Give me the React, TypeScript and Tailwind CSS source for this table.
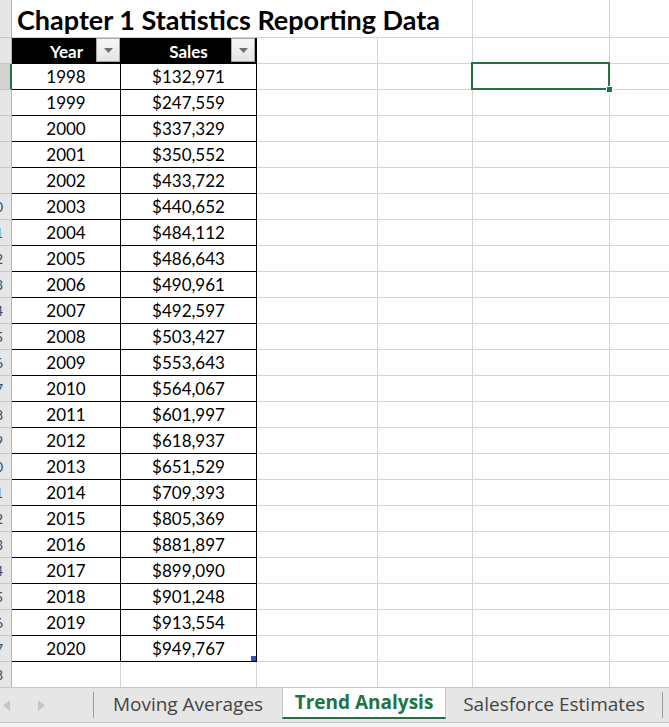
import React from 'react';

const rows: [number, string][] = [
  [1998, '$132,971'],
  [1999, '$247,559'],
  [2000, '$337,329'],
  [2001, '$350,552'],
  [2002, '$433,722'],
  [2003, '$440,652'],
  [2004, '$484,112'],
  [2005, '$486,643'],
  [2006, '$490,961'],
  [2007, '$492,597'],
  [2008, '$503,427'],
  [2009, '$553,643'],
  [2010, '$564,067'],
  [2011, '$601,997'],
  [2012, '$618,937'],
  [2013, '$651,529'],
  [2014, '$709,393'],
  [2015, '$805,369'],
  [2016, '$881,897'],
  [2017, '$899,090'],
  [2018, '$901,248'],
  [2019, '$913,554'],
  [2020, '$949,767'],
];

// row number header, only the right edge shows (sheet is scrolled)
function RowHead({ n, active, h = 'h-[26px]' }: { n: number; active?: boolean; h?: string }) {
  return (
    <div
      className={`${h} w-[12px] shrink-0 overflow-hidden border-b border-[#c8c8c8] ${
        active ? 'bg-[#d2d2d2] border-r-2 border-r-[#217346]' : 'bg-[#e6e6e6] border-r border-r-[#b4b4b4]'
      }`}
    >
      <div className="ml-[-20px] flex h-full w-[30px] items-center justify-center text-[14px] text-[#3c4a66]">
        {n}
      </div>
    </div>
  );
}

function FilterButton() {
  return (
    <div className="absolute right-[1px] top-[0px] flex h-[24px] w-[24px] items-center justify-center border border-[#a6a6a6] bg-gradient-to-b from-[#f7f7f7] to-[#e4e4e4]">
      <svg width="9" height="5" viewBox="0 0 9 5">
        <path d="M0 0h9L4.5 5z" fill="#707070" />
      </svg>
    </div>
  );
}

function GridTail({ selected }: { selected?: boolean }) {
  return (
    <>
      <div className="h-full w-[121px] shrink-0 border-b border-r border-[#d4d4d4]" />
      <div className="h-full w-[95px] shrink-0 border-b border-r border-[#d4d4d4]" />
      <div className="relative h-full w-[137px] shrink-0 border-b border-r border-[#d4d4d4]">
        {selected && (
          <>
            <div className="absolute left-[-2px] top-[-2px] z-10 h-[28px] w-[139px] border-2 border-[#217346]" />
            <div className="absolute bottom-[-4px] right-[-4px] z-20 h-[7px] w-[7px] border border-white bg-[#217346]" />
          </>
        )}
      </div>
      <div className="h-full flex-1 border-b border-[#d4d4d4]" />
    </>
  );
}

export default function App() {
  return (
    <div
      className="h-[727px] w-[669px] overflow-hidden bg-white text-black"
      style={{ fontFamily: 'Lato, "Open Sans", sans-serif' }}
    >
      <div className="flex h-[687px] flex-col overflow-hidden">
        {/* title row */}
        <div className="flex h-[38px] shrink-0">
          <RowHead n={3} h="h-[38px]" />
          <div className="flex h-full w-[461px] shrink-0 items-center border-b border-r border-[#d4d4d4] pl-[5px] pt-[1px]">
            <span className="whitespace-nowrap text-[27px] font-bold leading-none">
              Chapter 1 Statistics Reporting Data
            </span>
          </div>
          <div className="h-full w-[137px] shrink-0 border-b border-r border-[#d4d4d4]" />
          <div className="h-full flex-1 border-b border-[#d4d4d4]" />
        </div>

        {/* table header */}
        <div className="flex h-[26px] shrink-0">
          <RowHead n={4} />
          <div className="relative flex h-full w-[109px] shrink-0 items-center justify-center bg-black pt-[1px] text-[17px] font-bold text-white">
            Year
            <FilterButton />
          </div>
          <div className="relative flex h-full w-[136px] shrink-0 items-center justify-center border-r border-black bg-black pt-[1px] text-[17px] font-bold text-white">
            Sales
            <FilterButton />
          </div>
          <div className="h-full w-[121px] shrink-0 border-b border-r border-[#d4d4d4]" />
          <div className="h-full w-[95px] shrink-0 border-b border-r border-[#d4d4d4]" />
          <div className="h-full w-[137px] shrink-0 border-b border-r border-[#d4d4d4]" />
          <div className="h-full flex-1 border-b border-[#d4d4d4]" />
        </div>

        {rows.map(([year, sales], i) => (
          <div key={year} className="flex h-[26px] shrink-0">
            <RowHead n={i + 5} active={i === 0} />
            <div className="flex h-full w-[109px] shrink-0 items-center justify-center border-b border-r border-black text-[17px]">
              {year}
            </div>
            <div className="relative flex h-full w-[136px] shrink-0 items-center justify-center border-b border-r border-black text-[17px]">
              {sales}
              {i === rows.length - 1 && (
                <div className="absolute bottom-[0px] right-[0px] h-[5px] w-[5px] bg-[#3e4fb0]" />
              )}
            </div>
            <GridTail selected={i === 0} />
          </div>
        ))}

        {[28, 29].map((n) => (
          <div key={n} className="flex h-[26px] shrink-0">
            <RowHead n={n} />
            <div className="h-full w-[109px] shrink-0 border-b border-r border-[#d4d4d4]" />
            <div className="h-full w-[136px] shrink-0 border-b border-r border-[#d4d4d4]" />
            <GridTail />
          </div>
        ))}
      </div>

      {/* sheet tabs */}
      <div
        className="flex h-[36px] items-start border-y border-[#c6c6c6] bg-[#e6e6e6] text-[19px]"
        style={{ fontFamily: '"Open Sans", "Noto Sans", sans-serif' }}
      >
        <div className="flex h-[34px] w-[93px] shrink-0 items-center">
          <svg width="8" height="11" viewBox="0 0 8 11" className="ml-[3px]">
            <path d="M7 0v11L0 5.5z" fill="#c4c4c4" />
          </svg>
          <svg width="8" height="11" viewBox="0 0 8 11" className="ml-[27px]">
            <path d="M0 0v11l7-5.5z" fill="#c4c4c4" />
          </svg>
        </div>
        <div className="mt-[4px] h-[26px] w-px shrink-0 bg-[#9a9a9a]" />
        <div className="flex h-[32px] w-[188px] shrink-0 items-center justify-center text-[#444]">
          Moving Averages
        </div>
        <div className="flex h-[31px] w-[164px] shrink-0 items-center justify-center border-x border-b-2 border-x-[#c6c6c6] border-b-[#217346] bg-white font-bold text-[#217346]">
          Trend Analysis
        </div>
        <div className="flex h-[32px] w-[216px] shrink-0 items-center justify-center text-[#444]">
          Salesforce Estimates
        </div>
        <div className="mt-[4px] h-[26px] w-px shrink-0 bg-[#9a9a9a]" />
      </div>
      <div className="h-[4px] bg-[#f4f4f4]" />
    </div>
  );
}
